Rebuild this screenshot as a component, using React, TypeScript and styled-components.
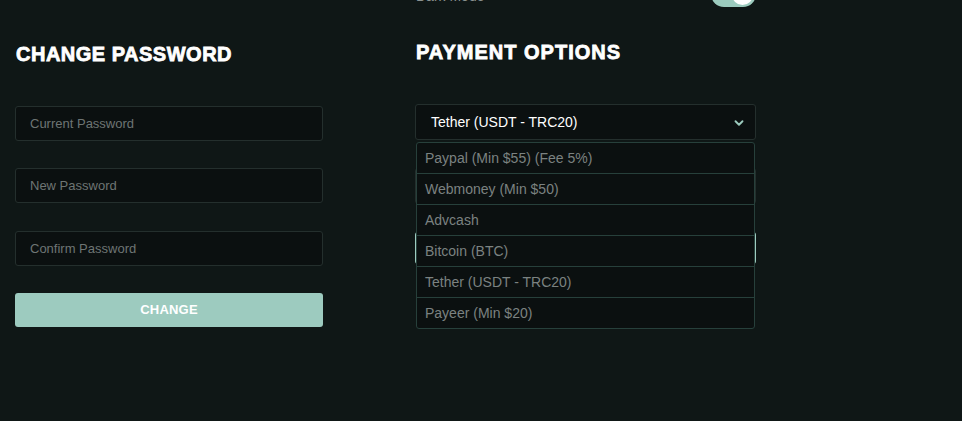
import React from "react";
import styled, { createGlobalStyle } from "styled-components";
import { ChevronDown } from "lucide-react";

const Global = createGlobalStyle`
  html, body {
    margin: 0;
    padding: 0;
    background: #0f1716;
    font-family: "Liberation Sans", Arial, sans-serif;
    overflow: hidden;
  }
`;

const Page = styled.div`
  display: grid;
  grid-template-columns: 308px 341px;
  column-gap: 92px;
  padding: 0 15px;
  align-items: start;
  height: 421px;
  box-sizing: border-box;
`;

const Column = styled.div<{ $offset: number }>`
  display: flex;
  flex-direction: column;
  margin-top: ${(p) => p.$offset}px;
`;

const TopRow = styled.div`
  display: flex;
  align-items: center;
  justify-content: space-between;
  height: 26px;
`;

const Label = styled.span`
  color: #8a9290;
  font-size: 14px;
  line-height: 16px;
  padding-left: 1px;
  margin-top: 3px;
`;

const Toggle = styled.div`
  width: 45px;
  height: 26px;
  border-radius: 13px;
  background: #9ccbbe;
  display: flex;
  align-items: center;
  justify-content: flex-end;
  padding: 0 3px;
  box-sizing: border-box;
`;

const Knob = styled.div`
  width: 21px;
  height: 21px;
  border-radius: 50%;
  background: #ffffff;
`;

const Heading = styled.h2<{ $mt: number; $ls: number }>`
  margin: ${(p) => p.$mt}px 0 40px 1px;
  color: #ffffff;
  font-size: 20px;
  line-height: 23px;
  font-weight: 700;
  -webkit-text-stroke: 0.8px #ffffff;
  letter-spacing: ${(p) => p.$ls}px;
`;

const Field = styled.div<{ $mt?: number; $h?: number }>`
  height: ${(p) => p.$h ?? 35}px;
  margin-top: ${(p) => p.$mt ?? 0}px;
  box-sizing: border-box;
  border: 1px solid #242f2d;
  border-radius: 3px;
  background: #0b1010;
  display: flex;
  align-items: center;
  padding: 0 14px;
  color: #6e7574;
  font-size: 13px;
`;

const Button = styled.div<{ $mt: number; $h?: number }>`
  height: ${(p) => p.$h ?? 34}px;
  margin-top: ${(p) => p.$mt}px;
  border-radius: 3px;
  background: #9dcbbf;
  color: #ffffff;
  font-weight: 700;
  font-size: 13px;
  display: flex;
  align-items: center;
  justify-content: center;
  letter-spacing: 0.2px;
  padding-bottom: 1px;
  box-sizing: border-box;
`;

const SelectWrap = styled.div`
  position: relative;
  display: flex;
  flex-direction: column;
`;

const SelectBox = styled.div`
  height: 36px;
  box-sizing: border-box;
  border: 1px solid #242f2d;
  border-radius: 3px;
  background: #0b1010;
  display: flex;
  align-items: center;
  justify-content: space-between;
  padding: 0 9px 0 15px;
  color: #ffffff;
  font-size: 14px;
`;

const Chevron = styled(ChevronDown)`
  color: #9ccbbe;
  margin-top: 1px;
`;

const Menu = styled.ul`
  position: absolute;
  top: 38px;
  left: 1px;
  right: 1px;
  margin: 0;
  padding: 0;
  list-style: none;
  border: 1px solid #27403b;
  border-radius: 3px;
  background: #0b1010;
  z-index: 5;
`;

const Option = styled.li`
  height: 30px;
  box-sizing: content-box;
  display: flex;
  align-items: center;
  padding-left: 8px;
  color: #7b8281;
  font-size: 14px;
  & + & {
    border-top: 1px solid #27403b;
  }
`;

const options = [
  "Paypal (Min $55) (Fee 5%)",
  "Webmoney (Min $50)",
  "Advcash",
  "Bitcoin (BTC)",
  "Tether (USDT - TRC20)",
  "Payeer (Min $20)",
];

export default function App() {
  return (
    <>
      <Global />
      <Page>
        <Column $offset={0}>
          <Heading $mt={43} $ls={0.5}>CHANGE PASSWORD</Heading>
          <Field>Current Password</Field>
          <Field $mt={27}>New Password</Field>
          <Field $mt={28}>Confirm Password</Field>
          <Button $mt={27}>CHANGE</Button>
        </Column>
        <Column $offset={-19}>
          <TopRow>
            <Label>Dark Mode</Label>
            <Toggle>
              <Knob />
            </Toggle>
          </TopRow>
          <Heading $mt={34} $ls={1}>PAYMENT OPTIONS</Heading>
          <SelectWrap>
            <SelectBox>
              Tether (USDT - TRC20)
              <Chevron size={14} strokeWidth={3.2} />
            </SelectBox>
            <Menu>
              {options.map((o) => (
                <Option key={o}>{o}</Option>
              ))}
            </Menu>
            <Field $mt={28} $h={36} />
            <Button $mt={28} $h={32} />
          </SelectWrap>
        </Column>
      </Page>
    </>
  );
}
